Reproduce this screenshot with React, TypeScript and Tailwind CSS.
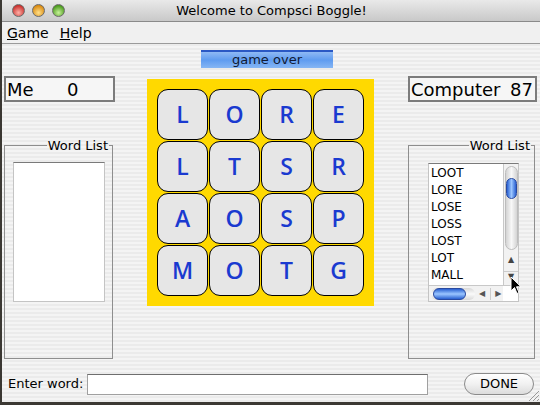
import React from "react";

const stripes =
  "bg-[repeating-linear-gradient(to_bottom,#ebebeb_0px,#ebebeb_2px,#f4f4f4_2px,#f4f4f4_4px)]";

const board = [
  ["L", "O", "R", "E"],
  ["L", "T", "S", "R"],
  ["A", "O", "S", "P"],
  ["M", "O", "T", "G"],
];

const words = ["LOOT", "LORE", "LOSE", "LOSS", "LOST", "LOT", "MALL"];

function Light({ from, to }: { from: string; to: string }) {
  return (
    <div
      className="w-[13px] h-[13px] rounded-full border border-[#6a6a6a]"
      style={{ background: `radial-gradient(circle at 50% 70%, ${to} 0%, ${from} 75%)` }}
    />
  );
}

function Panel({ children, className = "" }: { children?: React.ReactNode; className?: string }) {
  return (
    <fieldset className={`border border-[#8e8e8e] m-0 p-0 ${className}`}>
      <legend className="ml-auto mr-[3px] px-[1px] text-[13px] leading-[13px] text-black">Word List</legend>
      {children}
    </fieldset>
  );
}

export default function App() {
  return (
    <div className="w-[540px] h-[405px] bg-[#3b3833] overflow-hidden relative" style={{ fontFamily: '"DejaVu Sans", "Liberation Sans", sans-serif' }}>
      <div className={`ml-[2px] w-[538px] h-[402px] flex flex-col ${stripes} relative`}>
        {/* title bar */}
        <div className="h-[22px] flex items-center bg-gradient-to-b from-[#e9e9e9] to-[#c9c9c9] border-b border-[#8a8a8a] relative">
          <div className="flex gap-[7px] pl-[10px]">
            <Light from="#c9302c" to="#ffb0a8" />
            <Light from="#d98a10" to="#ffe08a" />
            <Light from="#4a9a1c" to="#c8f29a" />
          </div>
          <div className="flex-1 text-center text-[13px] text-black pr-[62px]">Welcome to Compsci Boggle!</div>
        </div>
        {/* menu bar */}
        <div className="h-[22px] flex items-center gap-[11px] pl-[5px] pt-[2px] text-[14px] text-black border-b border-[#9a9a9a] bg-[#f0f0f0]">
          <span><span className="underline">G</span>ame</span>
          <span><span className="underline">H</span>elp</span>
        </div>
        {/* content */}
        <div className="flex h-[325px]">
          {/* left column */}
          <div className="ml-[2px] w-[111px] flex flex-col">
            <div className="mt-[32px] h-[26px] border-2 border-[#7c7c7c] bg-[#f6f6f6] flex items-center text-[18px] text-black">
              <span className="pl-[1px] w-[61px]">Me</span>
              <span>0</span>
            </div>
            <Panel className="mt-[37px] w-[109px] h-[220px]">
              <div className="ml-[8px] mt-[10px] w-[92px] h-[140px] bg-white border border-[#c4c4c4] border-t-[#7a7a7a]" />
            </Panel>
          </div>
          {/* center column */}
          <div className="ml-[32px] w-[227px] flex flex-col">
            <div className="mt-[6px] ml-[54px] w-[132px] h-[18px] border-t-2 border-[#2a58c4] bg-gradient-to-b from-[#8fb9f4] via-[#5f9cf0] to-[#86b6f4] flex items-center justify-center text-[13px] text-[#111a33]">
              game over
            </div>
            <div className="mt-[11px] w-[227px] h-[227px] bg-[#ffd900] p-[10px]">
              <div className="grid grid-cols-4 gap-[1px] w-[207px]">
                {board.flat().map((ch, i) => (
                  <div
                    key={i}
                    className="h-[51px] rounded-[11px] border border-black bg-[#e6e6e6] flex items-center justify-center text-[23px] font-semibold text-[#1a3ad0]"
                    style={{ fontFamily: '"Open Sans", "DejaVu Sans", sans-serif' }}
                  >
                    {ch}
                  </div>
                ))}
              </div>
            </div>
          </div>
          {/* right column */}
          <div className="ml-[34px] w-[129px] flex flex-col">
            <div className="mt-[32px] h-[26px] border-2 border-[#7c7c7c] bg-[#f6f6f6] flex items-center text-[18px] text-black">
              <span className="pl-[1px] w-[100px]">Computer</span>
              <span>87</span>
            </div>
            <Panel className="mt-[37px] w-[127px] h-[220px]">
              <div className="ml-[19px] mt-[11px] w-[91px] h-[139px] border border-[#c4c4c4] border-t-[#7a7a7a] flex flex-col bg-white">
                <div className="flex h-[121px]">
                  <div className="w-[75px] pl-[2px] pt-[1px] text-[12px] leading-[17px] text-black">
                    {words.map((w) => (
                      <div key={w}>{w}</div>
                    ))}
                  </div>
                  <div className="w-[15px] border-l border-[#c8c8c8] bg-[#f2f2f2] flex flex-col items-center">
                    <div className="mt-[2px] w-[13px] h-[84px] rounded-full bg-gradient-to-r from-[#d4d4d4] via-[#f8f8f8] to-[#d4d4d4] border border-[#bdbdbd] relative">
                      <div className="absolute left-0 top-[11px] w-[11px] h-[21px] rounded-full bg-gradient-to-r from-[#2a5fd0] via-[#9cc6ff] to-[#2a5fd0] border border-[#2849a0]" />
                    </div>
                    <div className="mt-[5px] text-[8px] leading-[10px] text-[#444]">▲</div>
                    <div className="mt-[6px] text-[8px] leading-[10px] text-[#444] border-t border-[#ccc] w-full text-center">▼</div>
                  </div>
                </div>
                <div className="flex h-[16px] border-t border-[#c8c8c8]">
                  <div className="w-[75px] bg-[#f2f2f2] flex items-center">
                    <div className="ml-[2px] w-[44px] h-[12px] rounded-full bg-gradient-to-b from-[#d8d8d8] via-[#fafafa] to-[#d8d8d8] relative">
                      <div className="absolute left-[2px] top-0 w-[33px] h-[12px] rounded-full bg-gradient-to-b from-[#2a5fd0] via-[#9cc6ff] to-[#2a5fd0] border border-[#2849a0]" />
                    </div>
                    <span className="ml-[4px] text-[8px] text-[#555]">◀</span>
                    <span className="ml-[5px] text-[8px] text-[#555] border-l border-[#ccc] pl-[4px]">▶</span>
                  </div>
                  <div className="w-[15px] bg-white" />
                </div>
              </div>
            </Panel>
          </div>
        </div>
        {/* bottom row */}
        <div className="mt-[3px] flex items-center h-[24px] text-[13px] text-black">
          <span className="ml-[6px] w-[79px]">Enter word:</span>
          <div className="w-[341px] h-[21px] bg-white border border-[#a0a0a0] border-t-[#6e6e6e]" />
          <div className="ml-[36px] w-[70px] h-[22px] rounded-full border border-[#8a8a8a] bg-gradient-to-b from-[#ffffff] via-[#f1f1f1] to-[#dcdcdc] flex items-center justify-center text-[13px]">
            DONE
          </div>
        </div>
        {/* resize grip */}
        <svg className="absolute right-0 bottom-0" width="14" height="14" viewBox="0 0 14 14">
          <path d="M13 3 L3 13 M13 7 L7 13 M13 11 L11 13" stroke="#999" strokeWidth="1" />
        </svg>
        {/* cursor */}
        <svg className="absolute left-[508px] top-[276px]" width="12" height="19" viewBox="0 0 12 19">
          <path d="M1 1 L1 15 L4.5 11.5 L7 17.5 L9 16.5 L6.5 10.8 L11 10.8 Z" fill="#000" stroke="#fff" strokeWidth="1" />
        </svg>
      </div>
    </div>
  );
}
